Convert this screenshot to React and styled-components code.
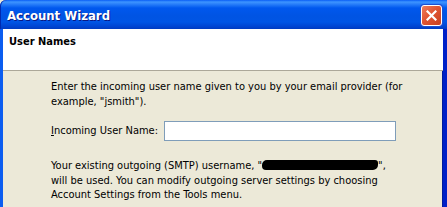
import React from "react";
import styled, { createGlobalStyle } from "styled-components";

const Global = createGlobalStyle`
  html, body {
    margin: 0;
    padding: 0;
    background: #ece9d8;
    overflow: hidden;
  }
  body {
    font-family: "DejaVu Sans Condensed", "DejaVu Sans", sans-serif;
    font-size: 11px;
    color: #000;
  }
`;

const Window = styled.div`
  width: 447px;
  height: 207px;
  display: flex;
  flex-direction: column;
  overflow: hidden;
`;

const TitleBar = styled.div`
  height: 29px;
  flex: none;
  display: flex;
  align-items: center;
  justify-content: space-between;
  padding: 0 5px 0 7px;
  border-top-left-radius: 6px;
  background: linear-gradient(
    to bottom,
    #0a5ef5 0px,
    #3d95ff 2px,
    #2a80fa 4px,
    #0058ee 8px,
    #0054e3 16px,
    #0055e5 22px,
    #0043cf 27px,
    #003bc0 29px
  );
  box-shadow: inset 1px 0 0 #002ab0;
`;

const Title = styled.span`
  font-family: "DejaVu Sans Condensed", "DejaVu Sans", sans-serif;
  font-weight: bold;
  font-size: 13px;
  color: #fff;
  text-shadow: 1px 1px 0 #0a1883;
  margin-top: 1px;
`;

const CloseButton = styled.div`
  width: 21px;
  height: 21px;
  box-sizing: border-box;
  border: 1px solid #fff;
  border-radius: 3px;
  background-color: #d9502e;
  background-image: linear-gradient(135deg, #ee7d5c 0%, #e05533 45%, #c9401f 100%);
  box-shadow: 0 0 0 1px #1f4fd0;
  display: flex;
  align-items: center;
  justify-content: center;
  margin-top: 1px;
`;

const Frame = styled.div`
  flex: 1;
  display: flex;
  flex-direction: column;
  border-left: 3px solid #0b5df0;
  border-right: 4px solid #0020c8;
  box-shadow: inset -1px 0 0 #001a9c;
  background: #ece9d8;
`;

const Header = styled.div`
  height: 42px;
  flex: none;
  background: #fff;
  border-bottom: 1px solid #aca899;
  padding: 6px 6px 0;
  box-sizing: border-box;
  font-weight: bold;
  font-size: 11px;
`;

const Body = styled.div`
  padding: 9px 12px 0 48px;
  line-height: 14.5px;
`;

const Para = styled.p`
  margin: ${(p) => p.$top || 0}px 0 0;
  white-space: nowrap;
`;

const FieldRow = styled.div`
  display: flex;
  align-items: center;
  margin-top: 12px;
`;

const Label = styled.label`
  width: 113px;
  flex: none;
`;

const Key = styled.span`
  text-decoration: underline;
`;

const Input = styled.input`
  width: 232px;
  height: 20px;
  box-sizing: border-box;
  border: 1px solid #7f9db9;
  background: #fff;
  padding: 0 3px;
  font: inherit;
  outline: none;
`;

const Redacted = styled.span`
  display: inline-block;
  width: 116px;
  height: 10px;
  vertical-align: -1px;
  background: #000;
  border-radius: 5px 3px 5px 4px;
`;

export default function App() {
  return (
    <>
      <Global />
      <Window>
        <TitleBar>
          <Title>Account Wizard</Title>
          <CloseButton aria-label="Close">
            <svg width="11" height="11" viewBox="0 0 11 11">
              <path d="M1.5 1.5 L9.5 9.5 M9.5 1.5 L1.5 9.5" stroke="#fff" strokeWidth="2.2" strokeLinecap="square" />
            </svg>
          </CloseButton>
        </TitleBar>
        <Frame>
          <Header>User Names</Header>
          <Body>
            <Para>
              Enter the incoming user name given to you by your email provider (for
              <br />
              example, "jsmith").
            </Para>
            <FieldRow>
              <Label>
                <Key>I</Key>ncoming User Name:
              </Label>
              <Input defaultValue="" />
            </FieldRow>
            <Para $top={18}>
              Your existing outgoing (SMTP) username, "<Redacted />",
              <br />
              will be used. You can modify outgoing server settings by choosing
              <br />
              Account Settings from the Tools menu.
            </Para>
          </Body>
        </Frame>
      </Window>
    </>
  );
}
